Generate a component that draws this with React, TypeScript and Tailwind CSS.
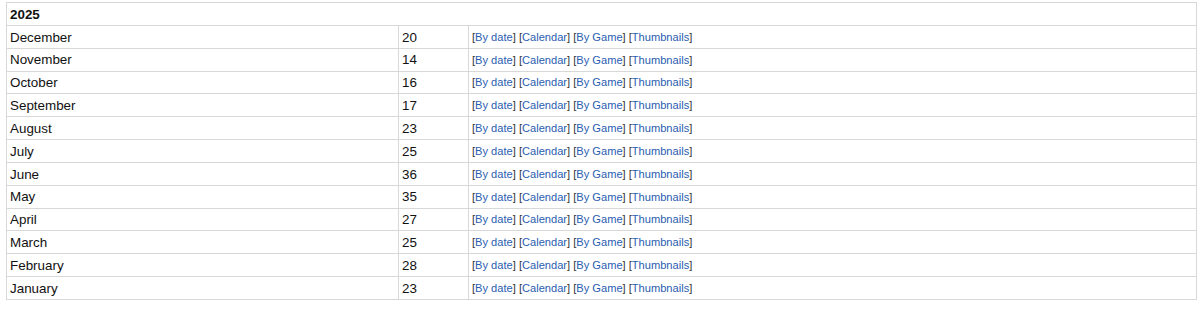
import React from "react";

const rows: [string, number][] = [
  ["December", 20],
  ["November", 14],
  ["October", 16],
  ["September", 17],
  ["August", 23],
  ["July", 25],
  ["June", 36],
  ["May", 35],
  ["April", 27],
  ["March", 25],
  ["February", 28],
  ["January", 23],
];

const links = ["By date", "Calendar", "By Game", "Thumbnails"];

export default function App() {
  return (
    <div className="bg-white w-[1200px] h-[311px] pt-[2px] pl-[6px]" style={{ fontFamily: '"Liberation Sans", Arial, sans-serif' }}>
      <table className="border-collapse w-[1191px] text-[13.4px] text-[#111]">
        <tbody>
          <tr className="h-[22.85px]">
            <td colSpan={3} className="border border-[#d8d8d8] px-[3px] pt-[1px] font-bold leading-none">2025</td>
          </tr>
          {rows.map(([m, n]) => (
            <tr key={m} className="h-[22.85px]">
              <td className="border border-[#d8d8d8] px-[3px] pt-[1px] w-[392px] leading-none">{m}</td>
              <td className="border border-[#d8d8d8] px-[3px] pt-[1px] w-[70px] leading-none">{n}</td>
              <td className="border border-[#d8d8d8] px-[3px] pt-[1px] text-[11.1px] text-[#333] leading-none">
                {links.map((l, i) => (
                  <React.Fragment key={l}>
                    {i > 0 && " "}[<span className="text-[#2a5db0]">{l}</span>]
                  </React.Fragment>
                ))}
              </td>
            </tr>
          ))}
        </tbody>
      </table>
    </div>
  );
}
